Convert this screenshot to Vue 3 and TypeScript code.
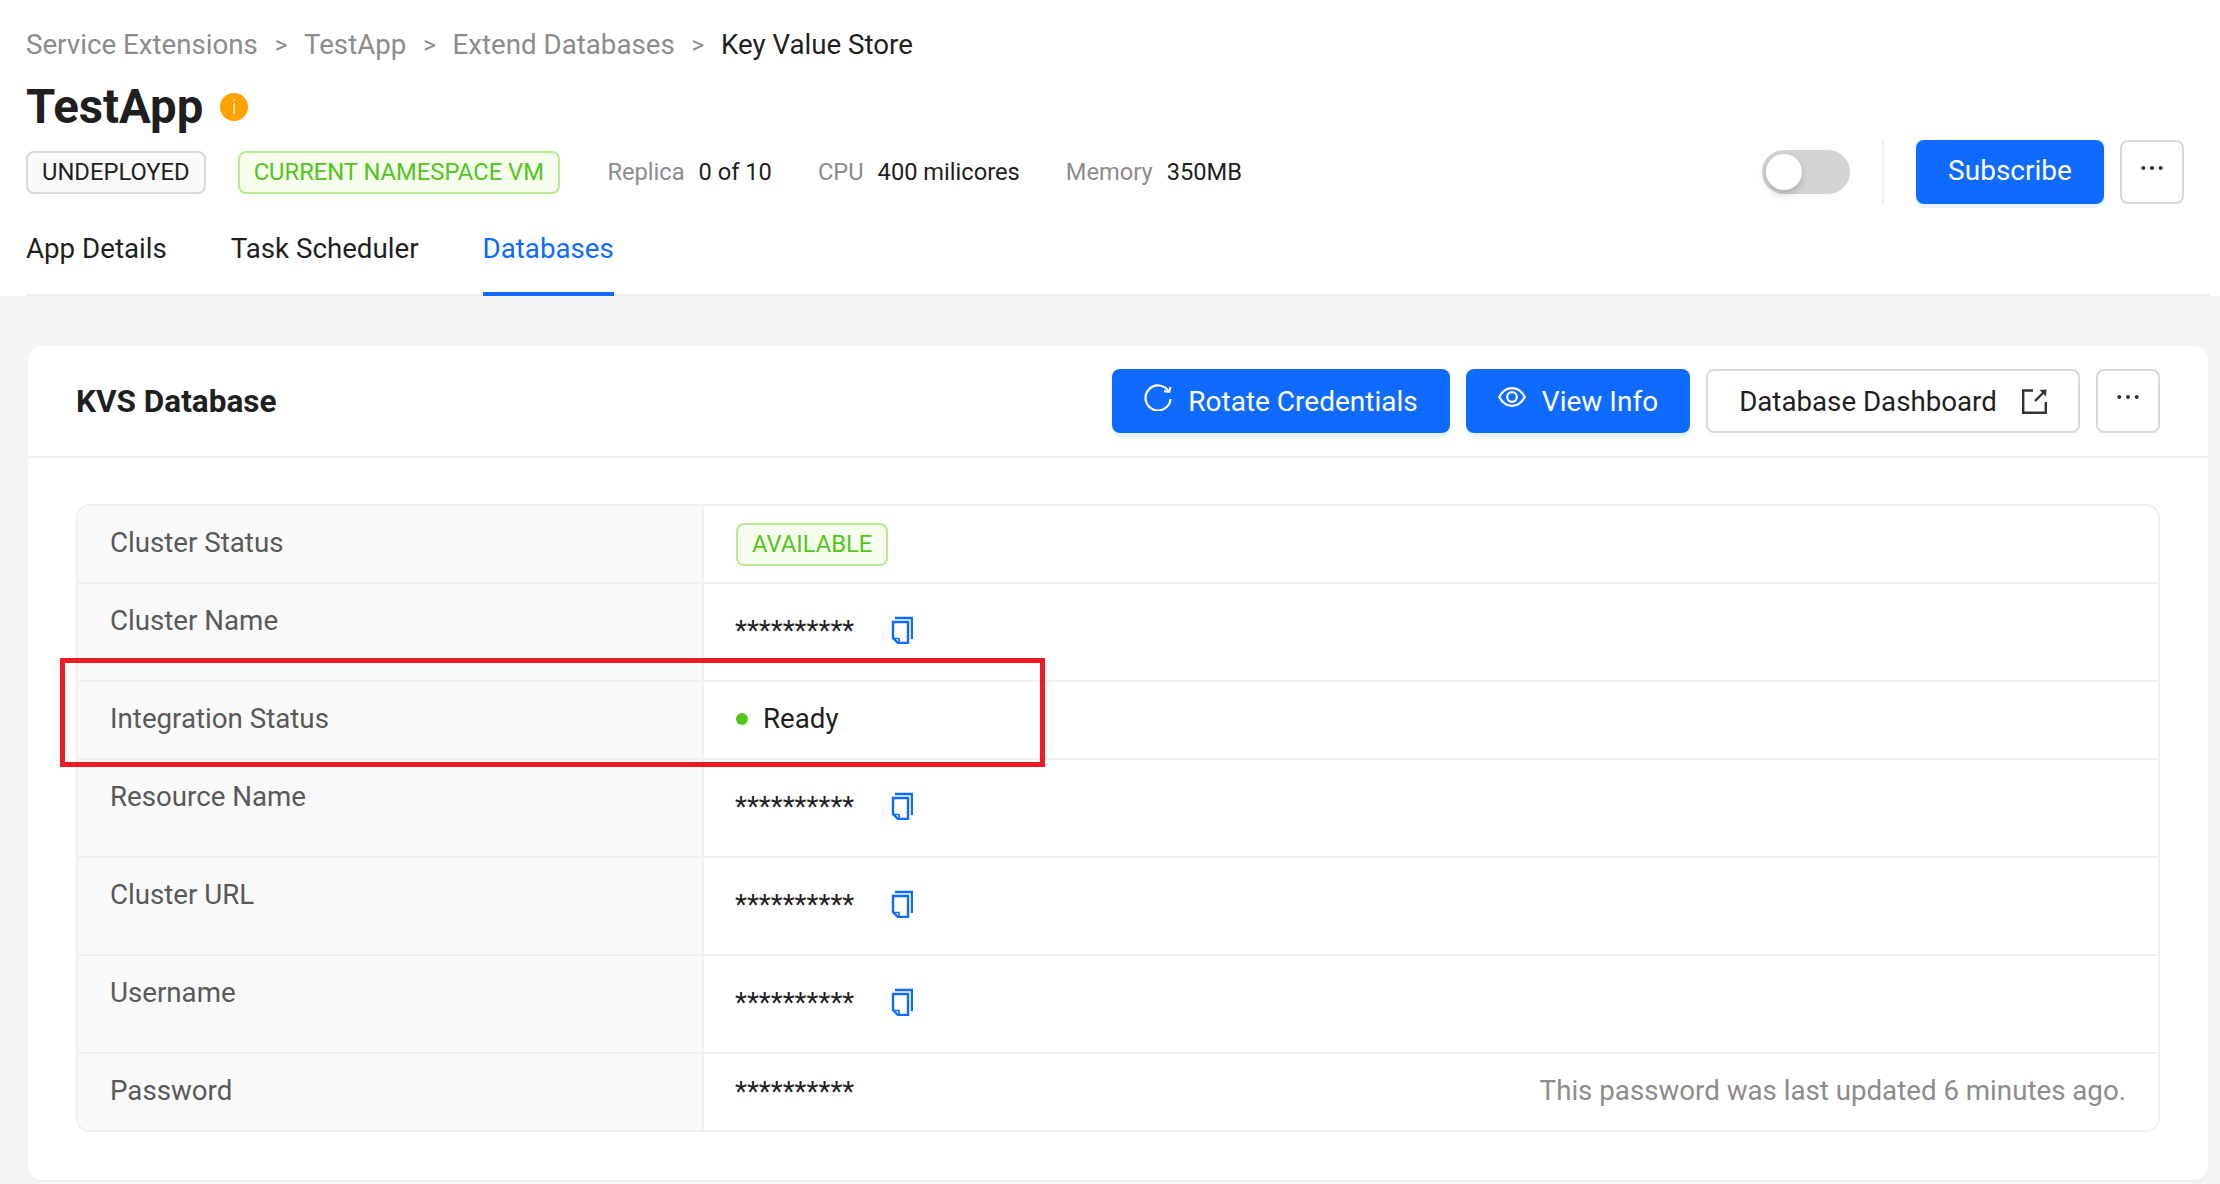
<script setup lang="ts">
interface Row { label: string; kind: 'tag' | 'secret' | 'status' | 'password'; height: number }
const rows: Row[] = [
  { label: 'Cluster Status', kind: 'tag', height: 78 },
  { label: 'Cluster Name', kind: 'secret', height: 98 },
  { label: 'Integration Status', kind: 'status', height: 78 },
  { label: 'Resource Name', kind: 'secret', height: 98 },
  { label: 'Cluster URL', kind: 'secret', height: 98 },
  { label: 'Username', kind: 'secret', height: 98 },
  { label: 'Password', kind: 'password', height: 76 },
]
const crumbs = ['Service Extensions', 'TestApp', 'Extend Databases']
const metrics = [
  { k: 'Replica', v: '0 of 10' },
  { k: 'CPU', v: '400 milicores' },
  { k: 'Memory', v: '350MB' },
]
</script>

<template>
  <div class="page">
    <header class="head">
      <nav class="crumbs">
        <template v-for="c in crumbs" :key="c">
          <span class="crumb">{{ c }}</span>
          <span class="sep">&gt;</span>
        </template>
        <span class="crumb-now">Key Value Store</span>
      </nav>
      <div class="title-row">
        <h1 class="title">TestApp</h1>
        <span class="info-dot">i</span>
      </div>
      <div class="meta-row">
        <span class="tag tag-grey">UNDEPLOYED</span>
        <span class="tag tag-green ns">CURRENT NAMESPACE VM</span>
        <div class="metrics">
          <span v-for="m in metrics" :key="m.k" class="metric">
            <span class="mk">{{ m.k }}</span><span class="mv">{{ m.v }}</span>
          </span>
        </div>
        <div class="head-actions">
          <span class="switch"><span class="knob"></span></span>
          <span class="vline"></span>
          <button class="btn primary sub">Subscribe</button>
          <button class="btn more">
            <svg class="dots" viewBox="0 0 24 6" fill="#333"><circle cx="3.300" cy="3" r="2" /><circle cx="12" cy="3" r="2" /><circle cx="20.700" cy="3" r="2" /></svg>
          </button>
        </div>
      </div>
      <div class="tabs">
        <span class="tab">App Details</span>
        <span class="tab">Task Scheduler</span>
        <span class="tab active">Databases</span>
      </div>
    </header>

    <main class="body">
      <section class="card">
        <div class="card-head">
          <h2 class="card-title">KVS Database</h2>
          <div class="card-actions">
            <button class="btn primary rotate">
              <svg class="ic" viewBox="0 0 28 28" fill="none" stroke="#fff" stroke-width="2.200">
                <path d="M26.500 16A12.500 12.500 0 1 1 24.800 8.600" />
                <path d="M26.500 4L25.200 8.800L20 8.200" />
              </svg>
              Rotate Credentials
            </button>
            <button class="btn primary view">
              <svg class="ic eye" viewBox="0 0 28 20" fill="none" stroke="#fff" stroke-width="2.200">
                <path d="M1.200 10C4.500 4 8.800 1.200 14 1.200S23.500 4 26.800 10C23.500 16 19.200 18.800 14 18.800S4.500 16 1.200 10Z" />
                <circle cx="14" cy="10" r="4.800" />
              </svg>
              View Info
            </button>
            <button class="btn plain dash">
              Database Dashboard
              <svg class="ext" viewBox="0 0 25 25" fill="none" stroke="#333" stroke-width="2.400">
                <path d="M11 1.500H1.200V23.800H23.800V13" />
                <path d="M13 12L23 2" />
                <path d="M17.500 1L24.500 .5L24 7.500Z" fill="#333" stroke="none" />
              </svg>
            </button>
            <button class="btn more">
              <svg class="dots" viewBox="0 0 24 6" fill="#333"><circle cx="3.300" cy="3" r="2" /><circle cx="12" cy="3" r="2" /><circle cx="20.700" cy="3" r="2" /></svg>
            </button>
          </div>
        </div>

        <div class="card-body">
          <div class="table">
            <div
              v-for="r in rows"
              :key="r.label"
              class="row"
              :class="'row-' + r.kind"
              :style="{ height: r.height + 'px' }"
            >
              <div class="cell-label">{{ r.label }}</div>
              <div class="cell-value">
                <span v-if="r.kind === 'tag'" class="tag tag-green">AVAILABLE</span>
                <template v-else-if="r.kind === 'secret'">
                  <span class="stars">**********</span>
                  <svg class="copy" viewBox="0 0 22 28" fill="none" stroke="#0f6bff" stroke-width="2.400">
                    <path d="M4 2H21V23" />
                    <path d="M2 6H17V27H7L2 22Z" />
                    <path d="M3 22.500H8V27" stroke-width="1.600" />
                  </svg>
                </template>
                <template v-else-if="r.kind === 'status'">
                  <span class="dot"></span><span class="ready">Ready</span>
                </template>
                <template v-else>
                  <span class="stars">**********</span>
                  <span class="note">This password was last updated 6 minutes ago.</span>
                </template>
              </div>
            </div>
          </div>
        </div>
      </section>
    </main>

    <div class="highlight"></div>
  </div>
</template>

<style>
html, body { margin: 0; background: #f4f4f4; }
</style>

<style scoped>
.page {
  position: relative;
  width: 2220px;
  height: 1184px;
  overflow: hidden;
  background: #f4f4f4;
  font-family: Roboto, "Liberation Sans", sans-serif;
  color: #1f1f1f;
  font-size: 27.700px;
}
.head {
  background: #fff;
  padding: 27px 36px 0 26px;
  height: 296px;
  box-sizing: border-box;
}
.crumbs { display: flex; align-items: center; height: 36px; line-height: 36px; }
.crumb { color: #8c8c8c; }
.crumb-now { color: #1f1f1f; }
.sep { color: #8c8c8c; margin: 0 16.800px; font-size: 24px; }
.title-row { display: flex; align-items: center; height: 60px; margin-top: 14px; }
.title { margin: 0; font-size: 47.300px; font-weight: 700; line-height: 60px; }
.info-dot {
  width: 28px; height: 28px; margin-left: 17px; border-radius: 50%;
  background: #ffa200; color: #fff; font-size: 20px; font-weight: 300; line-height: 28px; text-align: center;
}
.meta-row { display: flex; align-items: center; height: 64px; margin-top: 3px; }
.tag {
  display: inline-block; box-sizing: border-box; height: 43px; line-height: 39px;
  padding: 0 14px; border-radius: 8px; border: 2px solid; font-size: 23.750px;
}
.tag-grey { color: #1f1f1f; background: #fafafa; border-color: #d9d9d9; }
.tag-green { color: #52c41a; background: #f6ffed; border-color: #b7eb8f; }
.ns { margin-left: 32px; }
.metrics { display: flex; margin-left: 47.500px; gap: 46px; font-size: 23.660px; }
.metric { display: flex; gap: 14px; }
.mk { color: #8c8c8c; }
.head-actions { display: flex; align-items: center; margin-left: auto; }
.switch {
  position: relative; width: 88px; height: 44px; border-radius: 22px; background: #d4d4d4;
}
.knob {
  position: absolute; left: 4px; top: 4px; width: 36px; height: 36px; border-radius: 50%;
  background: #fff; box-shadow: 0 4px 8px rgba(0, 35, 11, .2);
}
.vline { width: 2px; height: 64px; background: #f0f0f0; margin: 0 32px; }
.btn {
  box-sizing: border-box; height: 64px; border-radius: 8px; font-family: inherit; font-size: 28px;
  display: inline-flex; align-items: center; justify-content: center; padding: 0; cursor: pointer;
}
.primary { background: #0f6bff; color: #fff; border: none; box-shadow: 0 4px 0 #e6f4ff; }
.plain, .more { background: #fff; color: #1f1f1f; border: 2px solid #d9d9d9; box-shadow: 0 4px 0 rgba(0,0,0,.02); }
.more { width: 64px; margin-left: 16px; }
.dots { width: 24px; height: 6px; margin-top: -8px; }
.sub { width: 188px; padding-bottom: 3px; }
.tabs {
  display: flex; gap: 64px; margin: 18px -26px 0 0; height: 74px; box-sizing: border-box;
  border-bottom: 2px solid #f0f0f0;
}
.tab { position: relative; line-height: 46px; padding-top: 3.500px; height: 72px; box-sizing: border-box; }
.tab.active { color: #0f6bff; }
.tab.active::after {
  content: ""; position: absolute; left: 0; right: 0; bottom: -2px; height: 4px; background: #0f6bff;
}
.body { padding: 50px 12px 0 28px; }
.card { background: #fff; border-radius: 14px; height: 834px; box-shadow: 0 2px 0 #eeeeee; }
.card-head {
  display: flex; align-items: center; justify-content: space-between; box-sizing: border-box;
  height: 112px; padding: 0 48px; border-bottom: 2px solid #f0f0f0;
}
.card-title { margin: 0; font-size: 31.500px; font-weight: 700; }
.card-actions { display: flex; align-items: center; gap: 16px; }
.card-actions .more { margin-left: 0; }
.rotate { width: 338px; }
.view { width: 224px; }
.dash { width: 374px; font-size: 27.700px; }
.ic { width: 28px; height: 28px; margin-right: 16px; margin-top: -8px; flex: none; }
.eye { height: 20px; }
.ext { width: 25px; height: 25px; margin-left: 25px; flex: none; }
.card-body { padding: 46px 48px 0; }
.table { border: 2px solid #f0f0f0; border-radius: 14px; overflow: hidden; }
.row { display: flex; box-sizing: border-box; border-bottom: 2px solid #f0f0f0; }
.row:last-child { border-bottom: none; }
.cell-label {
  width: 626px; box-sizing: border-box; flex: none; background: #fafafa;
  border-right: 2px solid #f0f0f0; padding: 17px 0 0 32px; color: #595959; line-height: 40px;
}
.cell-value { flex: 1; display: flex; align-items: center; padding: 0 32px; }
.row-secret .cell-value { align-items: flex-start; padding-top: 27px; }
.row-status .cell-value { padding-bottom: 3px; }
.stars { line-height: 40px; width: 119px; margin-left: -1px; }
.copy { width: 22px; height: 28px; margin-left: 37px; margin-top: 5px; flex: none; }
.dot { width: 12px; height: 12px; border-radius: 50%; background: #52c41a; }
.ready { margin-left: 15px; }
.note { margin-left: auto; margin-top: -3px; color: #8c8c8c; }
.highlight {
  position: absolute; left: 60px; top: 658px; width: 985px; height: 109px; box-sizing: border-box;
  border: 5px solid #ed1c24;
}
</style>
